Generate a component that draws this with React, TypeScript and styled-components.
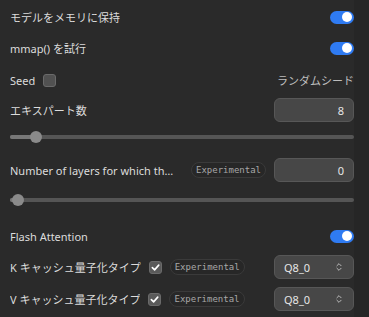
import React from "react";
import styled, { createGlobalStyle } from "styled-components";
import { ChevronsUpDown } from "lucide-react";

const GlobalStyle = createGlobalStyle`
  html, body {
    margin: 0;
    padding: 0;
    background: #2a2a2a;
  }
  body {
    font-family: "Noto Sans", "Noto Sans CJK JP", sans-serif;
    color: #dcdcdc;
  }
`;

const Page = styled.div`
  display: flex;
  width: 369px;
  height: 317px;
  overflow: hidden;
`;

const Panel = styled.div`
  flex: 1;
  display: flex;
  flex-direction: column;
  padding: 5px 0 0 10px;
  min-width: 0;
`;

const Gutter = styled.div`
  width: 15px;
  background: #262626;
`;

const Row = styled.div<{ $mt?: number }>`
  display: flex;
  align-items: center;
  gap: 8px;
  height: 24px;
  margin-top: ${(p) => p.$mt ?? 7}px;
`;

const Label = styled.span<{ $grow?: boolean }>`
  font-size: 11px;
  white-space: nowrap;
  overflow: hidden;
  text-overflow: ellipsis;
  flex: ${(p) => (p.$grow ? "1" : "0 0 auto")};
  min-width: 0;
  padding-right: ${(p) => (p.$grow ? "8px" : "0")};
`;

const Spacer = styled.div`
  flex: 1;
`;

const Hint = styled.span`
  font-size: 11px;
  color: #bdbdbd;
`;

const Toggle = styled.div`
  width: 24px;
  height: 13px;
  border-radius: 7px;
  background: #2f7bf2;
  display: flex;
  align-items: center;
  justify-content: flex-end;
  padding: 0 2px;
  box-sizing: border-box;
`;

const Knob = styled.div`
  width: 10px;
  height: 10px;
  border-radius: 50%;
  background: #fff;
`;

const Check = styled.div<{ $on?: boolean }>`
  width: 13px;
  height: 13px;
  box-sizing: border-box;
  border-radius: 3px;
  background: ${(p) => (p.$on ? "#5a5a5a" : "#515151")};
  border: 1px solid #6a6a6a;
  display: flex;
  align-items: center;
  justify-content: center;
`;

const Field = styled.div`
  width: 80px;
  height: 24px;
  box-sizing: border-box;
  border-radius: 6px;
  background: #474747;
  border: 1px solid #575757;
  display: flex;
  align-items: center;
  padding: 0 9px;
  font-size: 11px;
  color: #e6e6e6;
`;

const NumberField = styled(Field)`
  justify-content: flex-end;
`;

const SelectField = styled(Field)`
  justify-content: space-between;
`;

const Badge = styled.span`
  font-family: "DejaVu Sans Mono", monospace;
  font-size: 9px;
  color: #a8a8a8;
  border: 1px solid #3a3a3a;
  background: #272727;
  border-radius: 8px;
  padding: 1px 4px;
  line-height: 12px;
  white-space: nowrap;
`;

const SliderWrap = styled.div<{ $mt: number }>`
  position: relative;
  height: 14px;
  margin-top: ${(p) => p.$mt}px;
  display: flex;
  align-items: center;
`;

const Track = styled.div`
  width: 100%;
  height: 4px;
  border-radius: 2px;
  background: #555;
  overflow: hidden;
`;

const Fill = styled.div`
  height: 100%;
  background: #777;
`;

const Thumb = styled.div`
  position: absolute;
  top: 1px;
  width: 12px;
  height: 12px;
  border-radius: 50%;
  background: #8a8a8a;
  margin-left: -6px;
`;

const Switch = () => (
  <Toggle>
    <Knob />
  </Toggle>
);

const CheckMark = () => (
  <svg width="9" height="9" viewBox="0 0 10 10">
    <path d="M1.5 5.2 L4 7.6 L8.6 2.4" fill="none" stroke="#fff" strokeWidth="1.8" strokeLinecap="round" strokeLinejoin="round" />
  </svg>
);

const Slider = ({ pos, mt }: { pos: number; mt: number }) => (
  <SliderWrap $mt={mt}>
    <Track>
      <Fill style={{ width: `${pos}px` }} />
    </Track>
    <Thumb style={{ left: `${pos}px` }} />
  </SliderWrap>
);

const Select = ({ value }: { value: string }) => (
  <SelectField>
    <span>{value}</span>
    <ChevronsUpDown size={10} strokeWidth={2} color="#cfcfcf" />
  </SelectField>
);

export default function App() {
  return (
    <Page>
      <GlobalStyle />
      <Panel>
        <Row $mt={0}>
          <Label>モデルをメモリに保持</Label>
          <Spacer />
          <Switch />
        </Row>
        <Row>
          <Label>mmap() を試行</Label>
          <Spacer />
          <Switch />
        </Row>
        <Row $mt={8}>
          <Label>Seed</Label>
          <Check />
          <Spacer />
          <Hint>ランダムシード</Hint>
        </Row>
        <Row $mt={6}>
          <Label>エキスパート数</Label>
          <Spacer />
          <NumberField>8</NumberField>
        </Row>
        <Slider pos={26} mt={8} />
        <Row $mt={14}>
          <Label $grow>Number of layers for which the experts are kept on CPU</Label>
          <Badge>Experimental</Badge>
          <NumberField>0</NumberField>
        </Row>
        <Slider pos={8} mt={11} />
        <Row $mt={17}>
          <Label>Flash Attention</Label>
          <Spacer />
          <Switch />
        </Row>
        <Row $mt={7}>
          <Label>K キャッシュ量子化タイプ</Label>
          <Check $on>
            <CheckMark />
          </Check>
          <Badge>Experimental</Badge>
          <Spacer />
          <Select value="Q8_0" />
        </Row>
        <Row $mt={8}>
          <Label>V キャッシュ量子化タイプ</Label>
          <Check $on>
            <CheckMark />
          </Check>
          <Badge>Experimental</Badge>
          <Spacer />
          <Select value="Q8_0" />
        </Row>
      </Panel>
      <Gutter />
    </Page>
  );
}
